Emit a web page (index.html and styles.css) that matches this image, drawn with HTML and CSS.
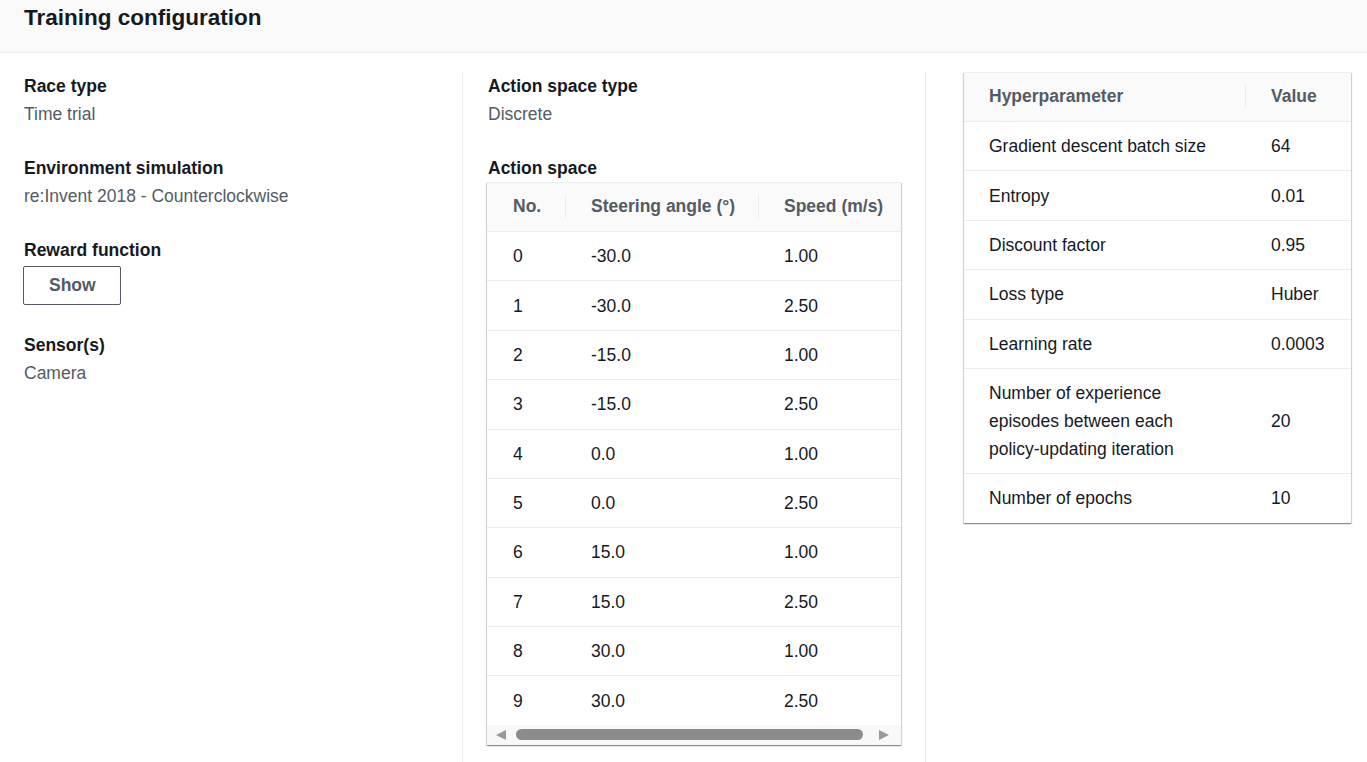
FILE: index.html
```html
<!DOCTYPE html>
<html lang="en">
<head>
<meta charset="utf-8">
<title>Training configuration</title>
<link rel="stylesheet" href="styles.css">
</head>
<body>
<div class="panel">
  <div class="panel-header">
    <h2 class="panel-title">Training configuration</h2>
  </div>
  <div class="columns">
    <div class="col col-1">
      <div class="item">
        <div class="label">Race type</div>
        <div class="value">Time trial</div>
      </div>
      <div class="item">
        <div class="label">Environment simulation</div>
        <div class="value">re:Invent 2018 - Counterclockwise</div>
      </div>
      <div class="item">
        <div class="label">Reward function</div>
        <button class="btn">Show</button>
      </div>
      <div class="item">
        <div class="label">Sensor(s)</div>
        <div class="value">Camera</div>
      </div>
    </div>
    <div class="col col-2">
      <div class="item">
        <div class="label">Action space type</div>
        <div class="value">Discrete</div>
      </div>
      <div class="item item-last">
        <div class="label">Action space</div>
        <div class="card card-action">
          <div class="scroll-view">
            <table class="tbl action-tbl">
              <colgroup>
                <col class="c-no"><col class="c-steer"><col class="c-speed">
              </colgroup>
              <thead>
                <tr><th>No.</th><th>Steering angle (°)</th><th>Speed (m/s)</th></tr>
              </thead>
              <tbody>
                <tr><td>0</td><td>-30.0</td><td>1.00</td></tr>
                <tr><td>1</td><td>-30.0</td><td>2.50</td></tr>
                <tr><td>2</td><td>-15.0</td><td>1.00</td></tr>
                <tr><td>3</td><td>-15.0</td><td>2.50</td></tr>
                <tr><td>4</td><td>0.0</td><td>1.00</td></tr>
                <tr><td>5</td><td>0.0</td><td>2.50</td></tr>
                <tr><td>6</td><td>15.0</td><td>1.00</td></tr>
                <tr><td>7</td><td>15.0</td><td>2.50</td></tr>
                <tr><td>8</td><td>30.0</td><td>1.00</td></tr>
                <tr><td>9</td><td>30.0</td><td>2.50</td></tr>
              </tbody>
            </table>
          </div>
          <div class="scrollbar">
            <span class="arrow arrow-left"></span>
            <span class="thumb"></span>
            <span class="arrow arrow-right"></span>
          </div>
        </div>
      </div>
    </div>
    <div class="col col-3">
      <div class="card">
        <table class="tbl hyper-tbl">
          <colgroup>
            <col class="c-param"><col class="c-value">
          </colgroup>
          <thead>
            <tr><th>Hyperparameter</th><th>Value</th></tr>
          </thead>
          <tbody>
            <tr><td>Gradient descent batch size</td><td>64</td></tr>
            <tr><td>Entropy</td><td>0.01</td></tr>
            <tr><td>Discount factor</td><td>0.95</td></tr>
            <tr><td>Loss type</td><td>Huber</td></tr>
            <tr><td>Learning rate</td><td>0.0003</td></tr>
            <tr><td>Number of experience episodes between each policy-updating iteration</td><td>20</td></tr>
            <tr><td>Number of epochs</td><td>10</td></tr>
          </tbody>
        </table>
      </div>
    </div>
  </div>
</div>
</body>
</html>
```
FILE: styles.css
```css
* { box-sizing: border-box; }

html, body {
  margin: 0;
  padding: 0;
  background: #ffffff;
}

body {
  font-family: "Liberation Sans", Arial, sans-serif;
  font-size: 17.5px;
  line-height: 28px;
  color: #16191f;
  overflow: hidden;
}

.panel-header {
  height: 53px;
  background: #fafafa;
  border-bottom: 1px solid #eaeded;
  padding: 0 24px;
}

.panel-title {
  margin: 0;
  font-size: 22.5px;
  line-height: 36px;
  font-weight: 700;
  color: #16191f;
}

.columns {
  display: grid;
  grid-template-columns: 462px 463px 1fr;
  padding-top: 19px;
  min-height: 709px;
}

.col-1 {
  padding: 0 24px;
}

.col-2 {
  border-left: 1px solid #eaeded;
  padding: 0 24px 0 25px;
}

.col-3 {
  border-left: 1px solid #eaeded;
  padding: 0 16px 0 38px;
}

.item {
  margin-bottom: 26px;
}

.item-last {
  margin-bottom: 0;
}

.label {
  font-weight: 700;
  color: #16191f;
}

.value {
  color: #545b64;
}

.btn {
  display: block;
  margin: 2px 0 0 -1px;
  font-family: inherit;
  font-size: 17.5px;
  line-height: 27px;
  font-weight: 700;
  color: #545b64;
  background: #ffffff;
  border: 1px solid #545b64;
  border-radius: 2px;
  padding: 5px 25px;
  width: 98px;
  text-align: center;
}

.card {
  background: #ffffff;
  border-top: 1px solid #eaeded;
  box-shadow: 0 1px 1px 0 rgba(0, 28, 36, 0.3),
              1px 1px 1px 0 rgba(0, 28, 36, 0.15),
              -1px 1px 1px 0 rgba(0, 28, 36, 0.15);
}

.card-action {
  margin-left: -1px;
}

.scroll-view {
  overflow: hidden;
}

.tbl {
  border-collapse: collapse;
  table-layout: fixed;
}

.tbl th {
  position: relative;
  background: #fafafa;
  color: #545b64;
  font-weight: 700;
  text-align: left;
  padding: 9px 10px 11px 26px;
  border-bottom: 1px solid #eaeded;
  white-space: nowrap;
}

.tbl th + th::before {
  content: "";
  position: absolute;
  left: 0;
  top: 11px;
  bottom: 13px;
  width: 1px;
  background: #eaeded;
}

.tbl td {
  padding: 10.2px 10px 10.2px 26px;
  border-bottom: 1px solid #eaeded;
  color: #16191f;
  vertical-align: middle;
}

.action-tbl {
  width: 440px;
}

.action-tbl td {
  white-space: nowrap;
}

.action-tbl tbody tr:last-child td {
  border-bottom: none;
}

.c-no { width: 78px; }
.c-steer { width: 193px; }
.c-speed { width: 169px; }

.hyper-tbl {
  width: 100%;
}

.hyper-tbl th:first-child,
.hyper-tbl td:first-child {
  padding-left: 25px;
  padding-right: 30px;
}

.hyper-tbl tbody tr:last-child td {
  border-bottom: none;
}

.c-param { width: 281px; }
.c-value { width: auto; }

.scrollbar {
  display: flex;
  align-items: center;
  height: 20px;
  background: #f8f8f8;
  padding: 0 0 0 9px;
}

.arrow {
  width: 0;
  height: 0;
  border-top: 5.5px solid transparent;
  border-bottom: 5.5px solid transparent;
}

.arrow-left {
  border-right: 10px solid #9a9a9a;
}

.arrow-right {
  border-left: 10px solid #9a9a9a;
}

.thumb {
  width: 347px;
  height: 11px;
  margin: 0 16px 0 10px;
  background: #8c8c8c;
  border-radius: 6px;
}
```
